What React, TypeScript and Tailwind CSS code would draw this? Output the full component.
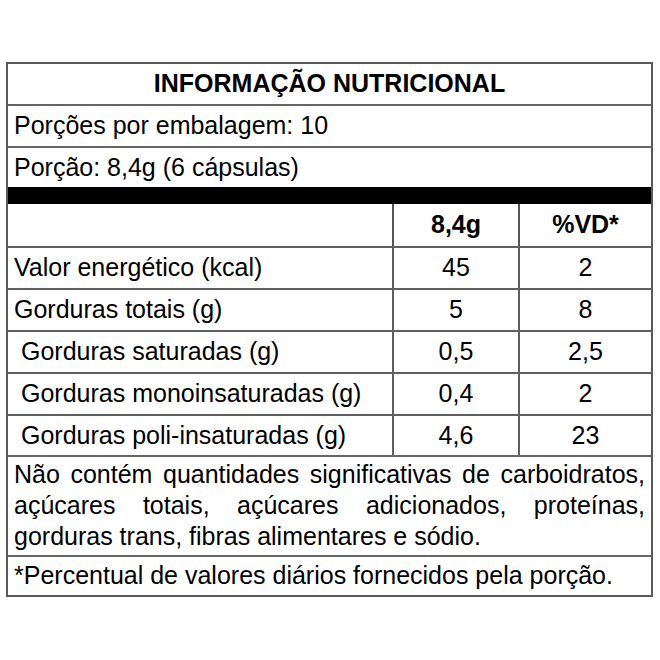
const rows = [
  { label: "Valor energético (kcal)", qty: "45", vd: "2", indent: false, h: "h-[42px]" },
  { label: "Gorduras totais (g)", qty: "5", vd: "8", indent: false, h: "h-[42px]" },
  { label: "Gorduras saturadas (g)", qty: "0,5", vd: "2,5", indent: true, h: "h-[42px]" },
  { label: "Gorduras monoinsaturadas (g)", qty: "0,4", vd: "2", indent: true, h: "h-[42px]" },
  { label: "Gorduras poli-insaturadas (g)", qty: "4,6", vd: "23", indent: true, h: "h-[41px]" },
];

export default function App() {
  return (
    <div className="w-[660px] h-[660px] bg-white pt-[62px] pl-[6px] font-['Liberation_Sans',Arial,sans-serif] text-[25px] text-black">
      <div className="w-[647px] border-2 border-[#5a5a5a]">
        <div className="h-[40px] flex items-center justify-center font-bold">
          INFORMAÇÃO NUTRICIONAL
        </div>
        <div className="h-[42px] border-t-2 border-[#666] flex items-center pl-[6px]">
          Porções por embalagem: 10
        </div>
        <div className="h-[41px] border-t-2 border-[#666] flex items-center pl-[6px]">
          Porção: 8,4g (6 cápsulas)
        </div>
        <div className="h-[17px] bg-black" />

        <div className="grid grid-cols-[386px_126px_1fr]">
          <div className="h-[42px] border-r-2 border-[#555]" />
          <div className="h-[42px] border-r-2 border-[#555] flex items-center justify-center font-bold">
            8,4g
          </div>
          <div className="h-[42px] flex items-center justify-center font-bold">%VD*</div>

          {rows.map((row) => (
            <div key={row.label} className="contents">
              <div
                className={`${row.h} border-t-2 border-r-2 border-[#5f5f5f] flex items-center ${
                  row.indent ? "pl-[13px]" : "pl-[6px]"
                }`}
              >
                {row.label}
              </div>
              <div className={`${row.h} border-t-2 border-r-2 border-[#5f5f5f] flex items-center justify-center`}>
                {row.qty}
              </div>
              <div className={`${row.h} border-t-2 border-[#5f5f5f] flex items-center justify-center`}>
                {row.vd}
              </div>
            </div>
          ))}
        </div>

        <div className="h-[100px] border-t-2 border-[#666] pl-[6px] pr-[6px] pt-[2px] leading-[31px] text-justify">
          Não contém quantidades significativas de carboidratos, açúcares totais, açúcares adicionados, proteínas,
          gorduras trans, fibras alimentares e sódio.
        </div>
        <div className="h-[40px] border-t-2 border-[#666] flex items-center pl-[6px]">
          *Percentual de valores diários fornecidos pela porção.
        </div>
      </div>
    </div>
  );
}
